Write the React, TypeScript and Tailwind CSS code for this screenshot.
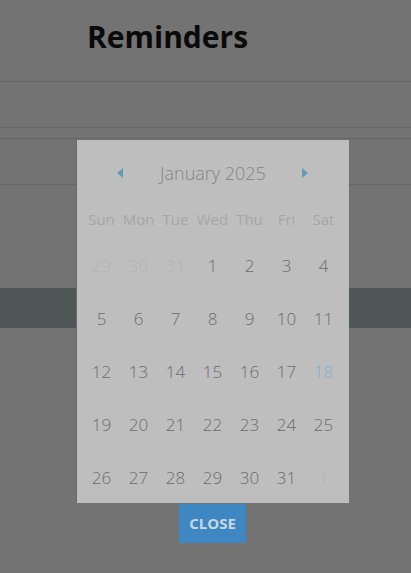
import React from "react";

const weekdays = ["Sun", "Mon", "Tue", "Wed", "Thu", "Fri", "Sat"];

type Day = { n: number; muted?: boolean; today?: boolean };

const weeks: Day[][] = [
  [{ n: 29, muted: true }, { n: 30, muted: true }, { n: 31, muted: true }, { n: 1 }, { n: 2 }, { n: 3 }, { n: 4 }],
  [{ n: 5 }, { n: 6 }, { n: 7 }, { n: 8 }, { n: 9 }, { n: 10 }, { n: 11 }],
  [{ n: 12 }, { n: 13 }, { n: 14 }, { n: 15 }, { n: 16 }, { n: 17 }, { n: 18, today: true }],
  [{ n: 19 }, { n: 20 }, { n: 21 }, { n: 22 }, { n: 23 }, { n: 24 }, { n: 25 }],
  [{ n: 26 }, { n: 27 }, { n: 28 }, { n: 29 }, { n: 30 }, { n: 31 }, { n: 1, muted: true }],
];

export default function App() {
  return (
    <div
      className="relative w-[411px] h-[573px] overflow-hidden bg-[#737373]"
      style={{ fontFamily: '"Open Sans", "Noto Sans", sans-serif' }}
    >
      {/* background page (dimmed) */}
      <div className="h-[82px] border-b border-[#666666] pl-[87px] pt-[17px]">
        <h1 className="text-[30px] font-bold leading-[40px] text-[#0a0a0a]">Reminders</h1>
      </div>
      <div className="h-[46px] border-b border-[#666666]" />
      <div className="h-[11px] border-b border-[#666666]" />
      <div className="h-[46px] border-b border-[#666666]" />
      <div className="h-[103px]" />
      <div className="h-[40px] bg-[#4e5656]" />

      {/* calendar popup */}
      <div className="absolute left-[77px] top-[140px] w-[272px] h-[363px] overflow-hidden bg-[#bebebe] shadow-[-1px_0_0_#6a6a6a]">
        <div className="relative h-[66px] flex items-center justify-center">
          <svg className="absolute left-[40px] top-[28px]" width="6" height="10" viewBox="0 0 6 10">
            <path d="M6 0 L0 5 L6 10 Z" fill="#5e9db3" />
          </svg>
          <span className="text-[18px] font-light text-[#858585] tracking-[0px]">January 2025</span>
          <svg className="absolute left-[225px] top-[28px]" width="6" height="10" viewBox="0 0 6 10">
            <path d="M0 0 L6 5 L0 10 Z" fill="#5e9db3" />
          </svg>
        </div>
        <div className="grid grid-cols-7 w-[259px] ml-[6px] h-[26px] items-center">
          {weekdays.map((d) => (
            <div key={d} className="text-center text-[15px] text-[#a6a6a6]">
              {d}
            </div>
          ))}
        </div>
        <div className="mt-[7px] ml-[6px] w-[259px]">
          {weeks.map((w, i) => (
            <div key={i} className="grid grid-cols-7 h-[53px] items-center">
              {w.map((d, j) => (
                <div
                  key={j}
                  className={
                    "text-center text-[17px] font-light " +
                    (d.today ? "text-[#7fb1c6]" : d.muted ? "text-[#b3b3b3]" : "text-[#6c6c6c]")
                  }
                >
                  {d.n}
                </div>
              ))}
            </div>
          ))}
        </div>
      </div>

      {/* close button */}
      <div className="absolute left-[179px] top-[504px] w-[67px] h-[39px] bg-[#3e87c2] flex items-center justify-center">
        <span className="text-[15px] font-bold text-[#c6d7e5]">CLOSE</span>
      </div>
    </div>
  );
}
